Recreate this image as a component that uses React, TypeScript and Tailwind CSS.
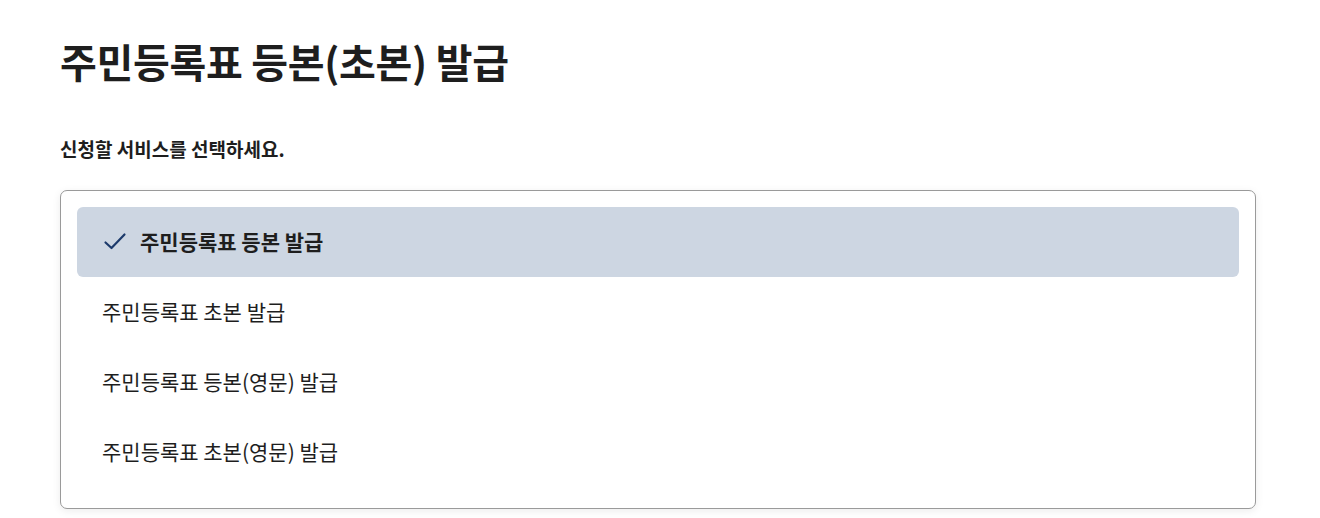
import { useState } from 'react';

const OPTIONS = [
  '주민등록표 등본 발급',
  '주민등록표 초본 발급',
  '주민등록표 등본(영문) 발급',
  '주민등록표 초본(영문) 발급',
];

function CheckIcon() {
  return (
    <svg viewBox="0 0 24 24" className="h-[24px] w-[24px] text-[#1c3a6b]" fill="none" stroke="currentColor" strokeWidth={2.2} strokeLinecap="round" strokeLinejoin="round" aria-hidden="true">
      <path d="M2.5 12.5l6 5.5 13-13.5" />
    </svg>
  );
}

export default function App() {
  const [selected, setSelected] = useState(0);

  return (
    <div
      className="min-h-screen bg-white px-[60px] pt-[35px] text-[#1e1e1e]"
      style={{ fontFamily: '"Noto Sans CJK KR", "Noto Sans", sans-serif' }}
    >
      <h1 className="text-[40px] font-bold leading-[52px] tracking-[-0.3px]">주민등록표 등본(초본) 발급</h1>

      <p className="mt-[50px] text-[19px] font-bold leading-[24px]">신청할 서비스를 선택하세요.</p>

      <ul
        role="listbox"
        className="mt-[29px] w-[1196px] rounded-[7px] border border-[#9a9a9a] bg-white px-4 pt-4 pb-[21px] shadow-[0_2px_8px_rgba(0,0,0,0.08)]"
      >
        {OPTIONS.map((label, i) => {
          const active = i === selected;
          return (
            <li
              key={label}
              role="option"
              aria-selected={active}
              onClick={() => setSelected(i)}
              className={
                active
                  ? 'flex h-[70px] cursor-pointer items-center gap-[13px] rounded-[6px] bg-[#cdd6e2] pl-[26px] text-[21px] font-bold'
                  : 'flex h-[70px] cursor-pointer items-center rounded-[6px] pl-[25px] text-[21px] text-[#1e1e1e]'
              }
            >
              {active && <CheckIcon />}
              <span>{label}</span>
            </li>
          );
        })}
      </ul>
    </div>
  );
}
